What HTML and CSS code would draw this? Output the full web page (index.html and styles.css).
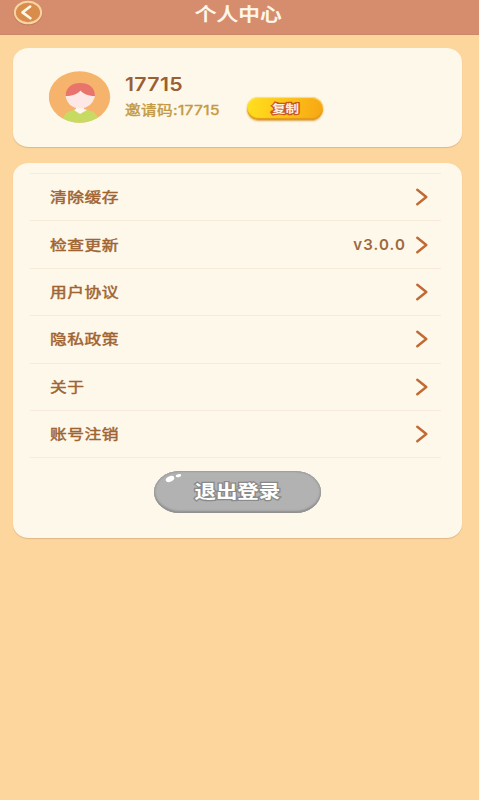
FILE: index.html
```
<!DOCTYPE html>
<html lang="zh-CN">
<head>
<meta charset="utf-8">
<title>个人中心</title>
<link rel="stylesheet" href="styles.css">
</head>
<body>
<div class="app">
  <header class="header">
    <svg class="back" width="30" height="26" viewBox="0 0 30 26"><ellipse cx="15" cy="13.3" rx="14.3" ry="12" fill="#ba7658"/><ellipse cx="15" cy="12.5" rx="13.1" ry="10.8" fill="#d88d4d" stroke="#f9d3a0" stroke-width="2"/><path d="M17.200 6.500 9.500 12.400l7.900 5.800" fill="none" stroke="#fff8e5" stroke-width="2.6" stroke-linecap="round" stroke-linejoin="round"/></svg>
    <h1 class="title"><span class="wide">个人中心</span></h1>
  </header>
  <main class="content">
    <section class="card profile">
      <svg class="avatar" width="62" height="52" viewBox="0 0 62 52">
        <defs><clipPath id="disc"><ellipse cx="30.500" cy="26" rx="30.700" ry="25.7"/></clipPath></defs>
        <g clip-path="url(#disc)">
          <path fill="#f5b36b" d="M0 0h62v52H0z"/>
          <path fill="#c7db62" d="M14 52c0-9 4-12 11-13l6 3 7-3c7 1 11 4 12 13z"/>
          <path fill="#fff7ef" d="M27 33h8v5l3 1-7 4-6-4 2-1z"/>
          <path fill="#fde8e6" d="M16.500 23c0 9 7 14.5 14.3 14.5S46 32 46 23L32 18z"/>
          <path fill="#e9746c" d="M16.5 25C17 16 23 12 31.3 12S46 16 46 25c-6 0-11-1.500-14.500-5.500C28 23.500 23 25 16.500 25z"/>
        </g>
      </svg>
      <div class="identity">
        <strong class="user"><span class="wide">17715</span></strong>
        <span class="invite"><span class="wide">邀请码:17715</span></span>
      </div>
      <button class="copy"><span class="wide">复制</span></button>
    </section>
    <section class="card menu">
      <ul class="list">
        <li class="row"><span class="wide label">清除缓存</span><svg class="arrow" viewBox="0 0 12 18"><path d="m1.300 1.800 9 7.200-9 7.200"/></svg></li>
        <li class="row"><span class="wide label">检查更新</span><span class="version">v3.0.0</span><svg class="arrow" viewBox="0 0 12 18"><path d="m1.300 1.800 9 7.200-9 7.200"/></svg></li>
        <li class="row"><span class="wide label">用户协议</span><svg class="arrow" viewBox="0 0 12 18"><path d="m1.300 1.800 9 7.200-9 7.200"/></svg></li>
        <li class="row"><span class="wide label">隐私政策</span><svg class="arrow" viewBox="0 0 12 18"><path d="m1.300 1.800 9 7.200-9 7.200"/></svg></li>
        <li class="row"><span class="wide label">关于</span><svg class="arrow" viewBox="0 0 12 18"><path d="m1.300 1.800 9 7.200-9 7.200"/></svg></li>
        <li class="row"><span class="wide label">账号注销</span><svg class="arrow" viewBox="0 0 12 18"><path d="m1.300 1.800 9 7.200-9 7.200"/></svg></li>
      </ul>
      <button class="logout">
        <svg class="shine" width="20" height="10" viewBox="0 0 20 10"><ellipse cx="6" cy="6" rx="4.500" ry="2.700" fill="#fff" transform="rotate(-24 6 6)"/><ellipse cx="14.500" cy="2.700" rx="2.800" ry="1.500" fill="#fff" transform="rotate(-12 14.500 2.700)"/></svg>
        <span class="wide">退出登录</span>
      </button>
    </section>
  </main>
</div>
</body>
</html>
```
FILE: styles.css
```
* { box-sizing: border-box; }
body {
  margin: 0;
  background: #fffaf2;
  font-family: "Noto Sans CJK SC", sans-serif;
}
.app {
  width: 479px;
  height: 800px;
  background: #fcd69d;
}
.wide {
  display: inline-block;
  white-space: nowrap;
  transform: scaleX(1.18);
  transform-origin: left center;
}
.header {
  display: flex;
  height: 35px;
  padding-left: 13px;
  background: #d68d6d;
  border-bottom: 1px solid #cd8868;
}
.back { flex: none; }
.title {
  margin: 0 0 0 152px;
  font-size: 18px;
  line-height: 27px;
  font-weight: 400;
  letter-spacing: .4px;
  color: #fff8ec;
  -webkit-text-stroke: .7px #fff8ec;
}
.content {
  display: flex;
  flex-direction: column;
  gap: 16px;
  padding: 13px 17px 0 13px;
}
.card {
  background: #fdf8e9;
  border-radius: 16px / 14px;
  box-shadow: 0 1px 1px #dfb887;
}
.profile {
  display: flex;
  height: 99px;
  padding-left: 36px;
}
.avatar { flex: none; margin-top: 23px; }
.identity {
  display: flex;
  flex-direction: column;
  width: 122px;
  margin: 25px 0 0 14px;
}
.user {
  font: 600 19px/24px Inter, sans-serif;
  letter-spacing: .3px;
  color: #9b5f34;
}
.user .wide { transform: scaleX(1.120); }
.invite {
  margin-top: 3px;
  font-family: Inter, "Noto Sans CJK SC", sans-serif;
  font-size: 13.500px;
  line-height: 21px;
  font-weight: 400;
  letter-spacing: .3px;
  color: #c39a43;
  -webkit-text-stroke: .4px #c39a43;
}
.invite .wide { transform: scaleX(1.160); }
.copy {
  width: 76px;
  height: 23px;
  margin-top: 49px;
  padding: 0;
  border: 0;
  border-radius: 12px;
  background: linear-gradient(100deg, #ffe01f, #fec317 50%, #f6a514);
  box-shadow: inset 0 -2px 1px #e39a1c, inset 0 1px 1px #ffe27a, 0 1px 2px #d9a54e;
  font: bold 11.500px/19px "Noto Sans CJK SC", sans-serif;
  color: #fff0e4;
  -webkit-text-stroke: 2.500px #c9561f;
  paint-order: stroke fill;
}
.copy .wide, .logout .wide { transform-origin: center; }
.menu {
  height: 375px;
  padding: 10px 21px 0 17px;
}
.list {
  margin: 0;
  padding: 0;
  list-style: none;
  border-top: 1px solid #f8ebdb;
}
.row {
  display: flex;
  align-items: center;
  height: 47.400px;
  padding: 0 13px 0 20px;
  border-bottom: 1px solid #f8ebdb;
}
.label {
  margin: 0 auto 2px 0;
  font-size: 14.200px;
  font-weight: 400;
  letter-spacing: .4px;
  line-height: 22px;
  color: #a06332;
  -webkit-text-stroke: .45px #a06332;
}
.version {
  margin-right: 10px;
  font: 600 15px/20px Inter, sans-serif;
  letter-spacing: 1.100px;
  color: #9b6942;
}
.arrow {
  width: 12px;
  height: 18px;
  fill: none;
  stroke: #c06a35;
  stroke-width: 2.400;
  stroke-linecap: round;
  stroke-linejoin: round;
}
.logout {
  position: relative;
  display: block;
  width: 167px;
  height: 42px;
  margin: 13px 0 0 124px;
  padding: 0 0 5px;
  border: 0;
  border-radius: 26px / 21px;
  background: #b2b2b2;
  box-shadow: inset 0 -2px 2px #8f8f8f, inset 0 1px 1px #a0a0a0, inset 1px 0 2px #a0a0a0, inset -1px 0 2px #a0a0a0;
  font: bold 18.200px/36px "Noto Sans CJK SC", sans-serif;
  color: #fff;
  -webkit-text-stroke: 2.500px #8a8a8a;
  paint-order: stroke fill;
}
.shine {
  position: absolute;
  left: 10px;
  top: 2px;
}
```
